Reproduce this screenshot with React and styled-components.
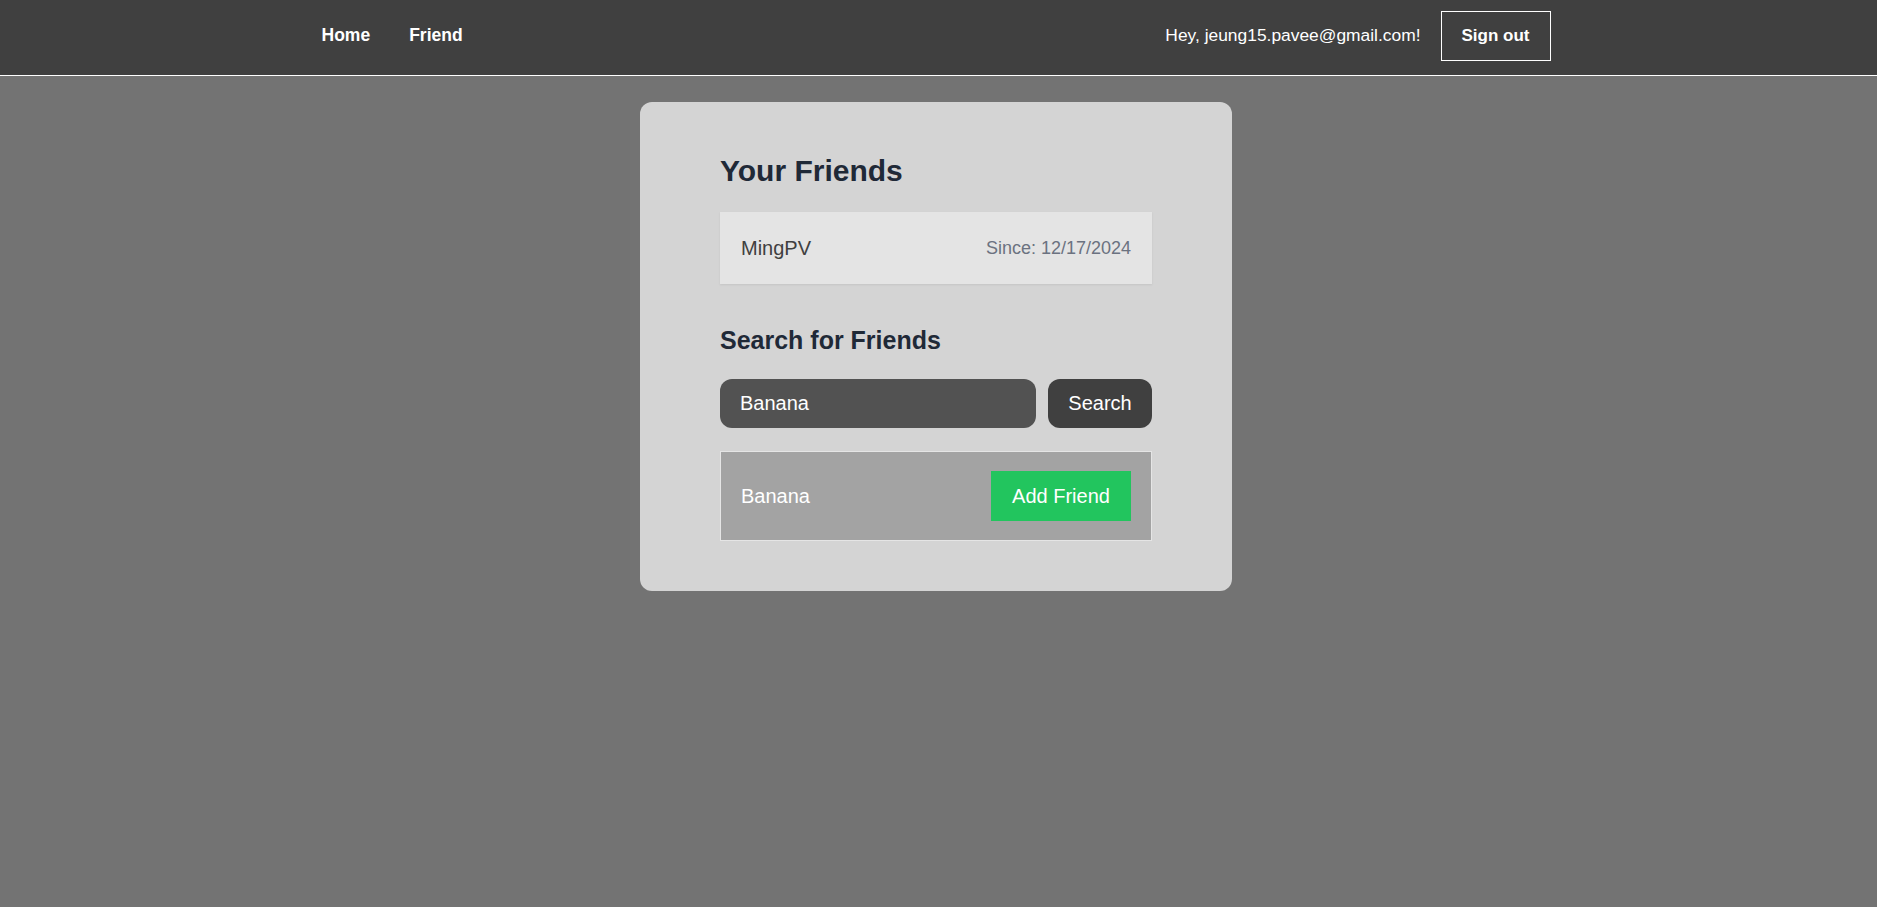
import React, { useState } from "react";
import styled, { createGlobalStyle } from "styled-components";

const GlobalStyle = createGlobalStyle`
  * {
    box-sizing: border-box;
  }

  body {
    margin: 0;
    background: #737373;
    font-family: "Liberation Sans", Arial, sans-serif;
    min-height: 100vh;
  }
`;

const friends = [{ username: "MingPV", since: "12/17/2024" }];

const App = () => {
  const [query, setQuery] = useState("Banana");
  const [results] = useState([{ username: "Banana" }]);

  return (
    <>
      <GlobalStyle />
      <NavBar>
        <NavInner>
          <NavLinks>
            <NavLink href="#">Home</NavLink>
            <NavLink href="#">Friend</NavLink>
          </NavLinks>
          <NavRight>
            <Greeting>Hey, jeung15.pavee@gmail.com!</Greeting>
            <SignOutButton type="button">Sign out</SignOutButton>
          </NavRight>
        </NavInner>
      </NavBar>

      <Main>
        <Card>
          <Title>Your Friends</Title>
          <FriendList>
            {friends.map((f) => (
              <FriendRow key={f.username}>
                <FriendName>{f.username}</FriendName>
                <SinceText>Since: {f.since}</SinceText>
              </FriendRow>
            ))}
          </FriendList>

          <SubTitle>Search for Friends</SubTitle>
          <SearchForm onSubmit={(e) => e.preventDefault()}>
            <SearchInput
              type="text"
              value={query}
              onChange={(e) => setQuery(e.target.value)}
            />
            <SearchButton type="submit">Search</SearchButton>
          </SearchForm>

          {results.map((r) => (
            <ResultRow key={r.username}>
              <ResultName>{r.username}</ResultName>
              <AddButton type="button">Add Friend</AddButton>
            </ResultRow>
          ))}
        </Card>
      </Main>
    </>
  );
};

const NavBar = styled.nav`
  background: #404040;
  height: 76px;
  border-bottom: 1px solid #ffffff;
  padding-bottom: 4px;
  display: flex;
  align-items: center;
`;

const NavInner = styled.div`
  width: 1280px;
  margin: 0 auto;
  padding: 0 28px 0 23px;
  display: flex;
  align-items: center;
  justify-content: space-between;
`;

const NavLinks = styled.div`
  display: flex;
  align-items: center;
  gap: 39px;
`;

const NavLink = styled.a`
  color: #ffffff;
  font-size: 17.5px;
  font-weight: 700;
  text-decoration: none;
`;

const NavRight = styled.div`
  display: flex;
  align-items: center;
  gap: 20px;
`;

const Greeting = styled.span`
  color: #ffffff;
  font-size: 17.4px;
`;

const SignOutButton = styled.button`
  width: 110px;
  height: 50px;
  background: transparent;
  border: 1px solid #ffffff;
  color: #ffffff;
  font-family: inherit;
  font-size: 17px;
  font-weight: 700;
  cursor: pointer;
`;

const Main = styled.main`
  display: flex;
  justify-content: center;
  padding: 26px 5px 0 0;
`;

const Card = styled.section`
  width: 592px;
  background: #d4d4d4;
  border-radius: 12px;
  padding: 51px 80px 50px;
  display: flex;
  flex-direction: column;
`;

const Title = styled.h2`
  margin: 0 0 23px;
  font-size: 30px;
  line-height: 36px;
  font-weight: 700;
  color: #1f2937;
`;

const FriendList = styled.div`
  display: flex;
  flex-direction: column;
  gap: 12px;
`;

const FriendRow = styled.div`
  height: 72px;
  background: #e4e4e4;
  box-shadow: 0 1px 2px rgba(0, 0, 0, 0.08);
  padding: 0 21px;
  display: flex;
  align-items: center;
  justify-content: space-between;
`;

const FriendName = styled.span`
  font-size: 20px;
  color: #404040;
`;

const SinceText = styled.span`
  font-size: 18px;
  color: #6b7280;
`;

const SubTitle = styled.h3`
  margin: 40px 0 23px;
  font-size: 25px;
  line-height: 32px;
  font-weight: 700;
  color: #1f2937;
`;

const SearchForm = styled.form`
  display: flex;
  gap: 12px;
  margin-bottom: 23px;
`;

const SearchInput = styled.input`
  flex: 1;
  min-width: 0;
  height: 49px;
  background: #525252;
  border: none;
  border-radius: 12px;
  padding: 0 20px;
  color: #ffffff;
  font-family: inherit;
  font-size: 20px;

  &:focus {
    outline: none;
  }
`;

const SearchButton = styled.button`
  width: 104px;
  height: 49px;
  background: #404040;
  border: none;
  border-radius: 12px;
  color: #ffffff;
  font-family: inherit;
  font-size: 20px;
  cursor: pointer;
`;

const ResultRow = styled.div`
  height: 90px;
  background: #a3a3a3;
  border: 1px solid #e5e5e5;
  padding: 0 20px;
  display: flex;
  align-items: center;
  justify-content: space-between;
`;

const ResultName = styled.span`
  font-size: 20px;
  color: #ffffff;
`;

const AddButton = styled.button`
  width: 140px;
  height: 50px;
  background: #22c55e;
  border: none;
  color: #ffffff;
  font-family: inherit;
  font-size: 20px;
  cursor: pointer;
`;

export default App;
